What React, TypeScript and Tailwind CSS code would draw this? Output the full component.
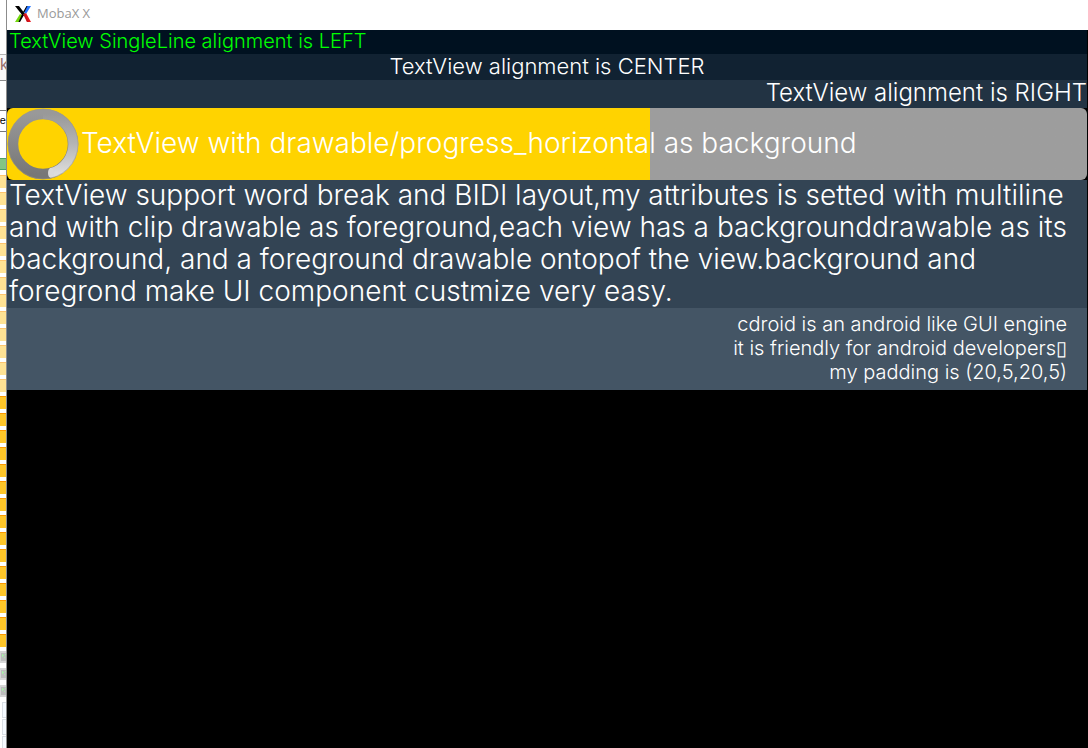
const lightFolders = Array.from({ length: 13 }, (_, i) => i);
const goldFolders = Array.from({ length: 15 }, (_, i) => i);
const greyFiles = [0, 1, 2];
const blankFiles = [0, 1, 2];

const paragraph = [
  "TextView support word break and BIDI layout,my attributes is setted with multiline",
  "and with clip drawable as foreground,each view has a backgrounddrawable as its",
  "background, and a foreground drawable ontopof the view.background and",
  "foregrond make UI component custmize very easy.",
];

const notes = [
  "cdroid is an android like GUI engine",
  "it is friendly for android developers▯",
  "my padding is (20,5,20,5)",
];

function BackWindow() {
  return (
    <aside className="flex w-[7px] shrink-0 flex-col overflow-hidden border-r border-[#8c8c8c] bg-white">
      <div className="h-[55px] shrink-0 border-b border-[#b4b4b4]" />
      <div className="h-[26px] shrink-0 border-b border-[#8c8c8c] bg-[#f8f8f8] font-['Liberation_Sans'] text-base leading-5 text-[#97706b]">
        k
      </div>
      <div className="h-[30px] shrink-0 border-b border-[#777777]" />
      <div className="flex h-[21px] shrink-0 justify-end border-b border-[#777777] font-['Liberation_Sans'] text-[11px] leading-[18px] text-black">
        ne
      </div>
      <div className="h-[26px] shrink-0" />
      <div className="h-3 shrink-0 border-y border-[#4da264] bg-[#84c584]" />
      <div className="h-[5px] shrink-0" />
      {lightFolders.map((i) => (
        <div key={i} className="h-[17px] shrink-0">
          <div className="h-[13px] border-t border-[#ffc56e] bg-[#ffe294]" />
        </div>
      ))}
      {goldFolders.map((i) => (
        <div key={i} className="h-[17px] shrink-0">
          <div className="h-[13px] border-t border-[#ff9a00] bg-[#ffc629]" />
        </div>
      ))}
      {greyFiles.map((i) => (
        <div key={i} className="h-[17px] shrink-0">
          <svg viewBox="0 0 7 12" className="h-3 w-[7px]" aria-hidden="true">
            <path d="M0 0h7v12H0z" fill="#d6d6d6" />
            <path d="M1 2h6v8H1z" fill="#bdbdbd" />
            <path d="M2 3h1v1h1v1H3v1H2zM5 3h1v1H5zM4 6h1v1H4z" fill="#a9efa9" />
          </svg>
        </div>
      ))}
      {blankFiles.map((i) => (
        <div key={i} className="h-[17px] shrink-0 pl-0.5">
          <div className="h-4 border border-r-0 border-[#d9dee4] bg-[#f5faff]" />
        </div>
      ))}
    </aside>
  );
}

function Logo() {
  return (
    <svg viewBox="0 0 16 16" className="size-4" aria-hidden="true">
      <path d="M12 0h4l-5 8-2-2z" fill="#2474ff" />
      <path d="M9 8l2-1 5 9h-4z" fill="#e8141c" />
      <path d="M5 8l2 1-3 7H0z" fill="#73d80e" />
      <path d="M0 0h4l6 8-2 2z" fill="#000" />
      <path d="M11.500 0h1L9 7 8 6zM7 8l2 1-4 7H3.500z" fill="#000" />
      <path d="M8 8l2 0 4 8h-2z" fill="#c8141c" />
    </svg>
  );
}

function Spinner() {
  return (
    <svg viewBox="0 0 72 72" className="size-[72px] shrink-0" aria-hidden="true">
      <defs>
        <linearGradient id="arc" x1="0" y1="0" x2="0" y2="1">
          <stop offset="0" stopColor="#999" />
          <stop offset="0.5" stopColor="#b4b4b4" />
          <stop offset="1" stopColor="#dcdcdc" />
        </linearGradient>
        <linearGradient id="ring" x1="0" y1="0" x2="0" y2="1">
          <stop offset="0" stopColor="#999" />
          <stop offset="1" stopColor="#777" />
        </linearGradient>
      </defs>
      <circle cx="36" cy="36" r="30" fill="none" stroke="url(#ring)" strokeWidth="10.500" />
      <path d="M36 6A30 30 0 0 1 44 65" fill="none" stroke="url(#arc)" strokeWidth="10" />
      <ellipse cx="44" cy="65" rx="3" ry="5" fill="#dadada" />
      <circle cx="36" cy="36" r="35" fill="none" stroke="#a39a78" strokeWidth="0.500" />
    </svg>
  );
}

export default function App() {
  return (
    <div className="flex h-screen overflow-hidden bg-black font-[Inter,sans-serif] font-light text-white">
      <BackWindow />
      <div className="flex min-w-0 grow flex-col">
        <header className="flex h-[30px] shrink-0 items-center gap-1.5 bg-white pb-0.5 pl-2 font-['Open_Sans',sans-serif] text-[13px] font-normal text-[#999999]">
          <Logo />
          <h1>MobaX X</h1>
        </header>
        <main className="mr-px whitespace-nowrap">
          <p className="bg-[#001120] pb-0.5 pl-0.5 text-xl leading-[22px] text-[#00ff00]">
            TextView SingleLine alignment is LEFT
          </p>
          <p className="bg-[#112232] pb-0.5 text-center text-[22px] leading-6">
            TextView alignment is CENTER
          </p>
          <p className="bg-[#223343] pb-0.5 text-right text-[24px] leading-[26px]">
            TextView alignment is RIGHT
          </p>
          <div className="bg-black">
            <div className="flex h-[72px] items-center gap-0.5 rounded-md bg-linear-to-r from-[#ffd300] from-[59.500%] to-[#9d9d9d] to-[59.500%] text-[28px] leading-8">
              <Spinner />
              <p className="pb-0.5">TextView with drawable/progress_horizontal as background</p>
            </div>
          </div>
          <p className="bg-[#334454] pl-0.5 text-[28px] leading-8">
            {paragraph.map((line) => (
              <span key={line} className="block pb-0.5 leading-[30px]">
                {line}
              </span>
            ))}
          </p>
          <p className="bg-[#445565] px-5 py-[5px] text-right text-xl leading-6">
            {notes.map((line) => (
              <span key={line} className="block pb-0.5 leading-[22px]">
                {line}
              </span>
            ))}
          </p>
        </main>
      </div>
    </div>
  );
}
